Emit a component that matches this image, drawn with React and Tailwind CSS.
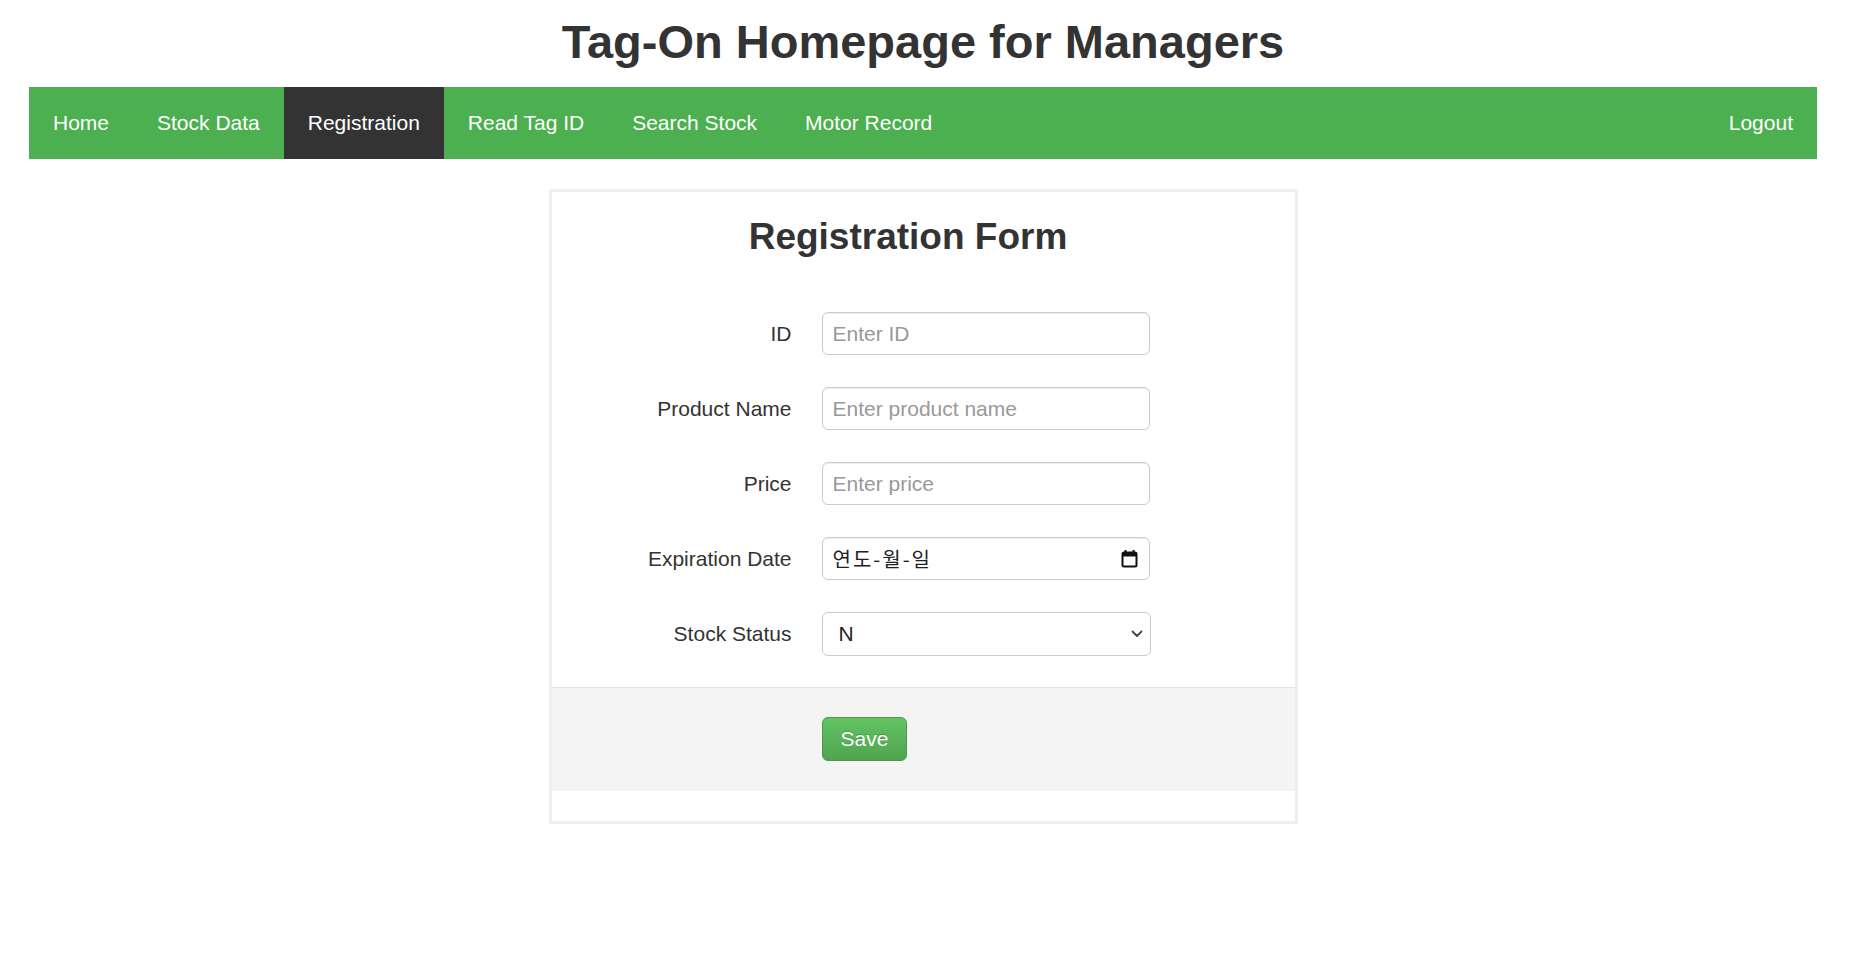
import { useState } from 'react'

const navItems = ['Home', 'Stock Data', 'Registration', 'Read Tag ID', 'Search Stock', 'Motor Record']

function CalendarIcon() {
  return (
    <svg width="17" height="19" viewBox="0 0 17 19" fill="none">
      <rect x="1.5" y="3.5" width="14" height="14" rx="1.5" stroke="#111" strokeWidth="2" />
      <rect x="1.5" y="3.5" width="14" height="4" fill="#111" />
      <rect x="3.5" y="1" width="2" height="3" fill="#111" />
      <rect x="11.5" y="1" width="2" height="3" fill="#111" />
    </svg>
  )
}

function Chevron() {
  return (
    <svg width="12" height="8" viewBox="0 0 12 8" fill="none">
      <path d="M1.5 1.5 L6 6 L10.5 1.5" stroke="#444" strokeWidth="1.8" strokeLinecap="round" strokeLinejoin="round" />
    </svg>
  )
}

const inputCls =
  'h-[43px] w-[328px] rounded-[6px] border-[1.5px] border-[#ccc] bg-white px-[10px] text-[21px] text-[#333] placeholder:text-[#999] shadow-[inset_0_1px_1px_rgba(0,0,0,0.075)] outline-none'

export default function App() {
  const [active] = useState('Registration')

  return (
    <div className="w-[1846px] bg-white font-['Liberation_Sans',Arial,sans-serif] text-[#333]">
      <h1 className="pt-[14px] pb-[18px] text-center text-[47px] font-bold leading-[55px]">Tag-On Homepage for Managers</h1>

      <nav className="mx-[29px] flex h-[72px] bg-[#4CAF50] text-[21px] text-white">
        {navItems.map(item => (
          <a
            key={item}
            className={`flex items-center px-[24px] ${item === active ? 'bg-[#333]' : ''}`}
          >
            {item}
          </a>
        ))}
        <a className="ml-auto flex items-center px-[24px]">Logout</a>
      </nav>

      <div className="mx-auto mt-[30px] w-[749px] border-[3px] border-[#efefef]">
        <h2 className="pt-[24px] pr-[30px] text-center text-[37px] font-bold leading-[41px]">Registration Form</h2>

        <div className="mt-[55px] grid grid-cols-[240px_329px] gap-x-[30px] gap-y-[32px] pb-[31px] text-[21px]">
          <label className="flex items-center justify-end">ID</label>
          <input className={inputCls} placeholder="Enter ID" />

          <label className="flex items-center justify-end">Product Name</label>
          <input className={inputCls} placeholder="Enter product name" />

          <label className="flex items-center justify-end">Price</label>
          <input className={inputCls} placeholder="Enter price" />

          <label className="flex items-center justify-end">Expiration Date</label>
          <div className="flex h-[43px] w-[328px] items-center justify-between rounded-[6px] border-[1.5px] border-[#ccc] bg-white pl-[10px] pr-[11px] shadow-[inset_0_1px_1px_rgba(0,0,0,0.075)]">
            <span className="font-['Noto_Sans_CJK_KR',sans-serif] text-[20px] tracking-[2px] text-[#222]">연도-월-일</span>
            <CalendarIcon />
          </div>

          <label className="flex items-center justify-end">Stock Status</label>
          <div className="flex h-[44px] w-[329px] items-center justify-between rounded-[6px] border-[1.5px] border-[#ccc] bg-white pl-[16px] pr-[7px]">
            <span className="text-[#222]">N</span>
            <Chevron />
          </div>
        </div>

        <div className="border-t border-[#e5e5e5] bg-[#f4f4f4] pt-[29px] pb-[30px] pl-[270px]">
          <button className="h-[44px] rounded-[6px] border border-[#4a9a4a] bg-linear-to-b from-[#62c462] to-[#51a351] px-[18px] text-[21px] text-white [text-shadow:0_-1px_0_rgba(0,0,0,0.2)]">
            Save
          </button>
        </div>
        <div className="h-[30px]" />
      </div>
    </div>
  )
}
